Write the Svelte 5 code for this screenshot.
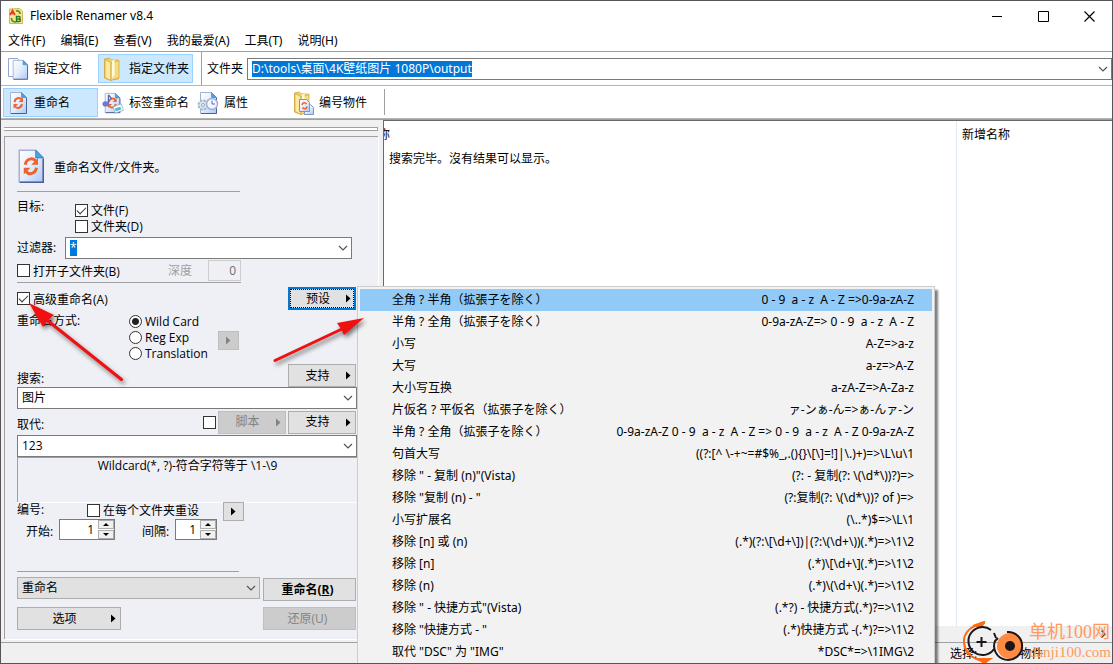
<script>
    const menus = ['文件(F)', '编辑(E)', '查看(V)', '我的最爱(A)', '工具(T)', '说明(H)'];

    const presets = [
        ['全角 ? 半角（拡張子を除く）', '0 - 9  a - z  A - Z =>0-9a-zA-Z'],
        ['半角 ? 全角（拡張子を除く）', '0-9a-zA-Z=> 0 - 9  a - z  A - Z'],
        ['小写', 'A-Z=>a-z'],
        ['大写', 'a-z=>A-Z'],
        ['大小写互换', 'a-zA-Z=>A-Za-z'],
        ['片仮名 ? 平仮名（拡張子を除く）', 'ァ-ンぁ-ん=>ぁ-んァ-ン'],
        ['半角 ? 全角（拡張子を除く）', '0-9a-zA-Z 0 - 9  a - z  A - Z => 0 - 9  a - z  A - Z 0-9a-zA-Z'],
        ['句首大写', '((?:[^ \\-+~=#$%_,.(){}\\[\\]=!]|\\.)+)=>\\L\\u\\1'],
        ['移除 " - 复制 (n)"(Vista)', '(?: - 复制(?: \\(\\d*\\))?)=>'],
        ['移除 "复制 (n) - "', '(?:复制(?: \\(\\d*\\))? of )=>'],
        ['小写扩展名', '(\\..*)$=>\\L\\1'],
        ['移除 [n] 或 (n)', '(.*)(?:\\[\\d+\\])|(?:\\(\\d+\\))(.*)=>\\1\\2'],
        ['移除 [n]', '(.*)\\[\\d+\\](.*)=>\\1\\2'],
        ['移除 (n)', '(.*)\\(\\d+\\)(.*)=>\\1\\2'],
        ['移除 " - 快捷方式"(Vista)', '(.*?) - 快捷方式(.*)?=>\\1\\2'],
        ['移除 "快捷方式 - "', '(.*)快捷方式 -(.*)?=>\\1\\2'],
        ['取代 "DSC" 为 "IMG"', '*DSC*=>\\1IMG\\2']
    ];

    let selected = $state(0);
    let path = $state('D:\\tools\\桌面\\4K壁纸图片 1080P\\output');
    let filter = $state('*');
    let search = $state('图片');
    let replace = $state('123');
    let mode = $state('wild');
</script>

{#snippet chevron()}
    <svg class="chevron" width="10" height="6" viewBox="0 0 10 6"><path d="M1 1l4 4 4-4" fill="none" stroke="#555" stroke-width="1.2" /></svg>
{/snippet}

{#snippet tri()}
    <svg class="tri" width="5" height="9" viewBox="0 0 5 9"><path d="M0 0.5v8l4.5-4z" fill="currentColor" /></svg>
{/snippet}

{#snippet page()}
    <path d="M3.5 1.5h11l5 5v16h-16z" fill="url(#paper)" stroke="#a3b1d6" />
    <path d="M19.500 7v15.500H4" fill="none" stroke="#4c5f96" />
    <path d="M14.500 1.500v5h5z" fill="#4aa3e8" stroke="#2f7fc9" stroke-width=".6" />
{/snippet}

{#snippet cycle()}
    <g fill="none" stroke="#f0622d" stroke-width="2">
        <path d="M7.500 11c.6-4 5-5 7-2.500" />
        <path d="M15 13c-.6 4-5 5-7 2.500" />
    </g>
    <path d="M16 6.500v4.500h-4.500zM6.500 17.500v-4.500h4.500z" fill="#f0622d" />
{/snippet}

{#snippet folder()}
    <path d="M2.500 2l5-1 2 2h7v19l-9 1-5-2z" fill="url(#folder)" stroke="#d2a93c" stroke-width=".8" />
    <path d="M3 2.500l6 3v18l-6-3z" fill="#fbe9a0" stroke="#cfa43a" stroke-width=".7" />
    <path d="M9 6l8-2.500v17l-8 3z" fill="#f6dc80" stroke="#cfa43a" stroke-width=".7" />
    <path d="M10 4l2.500-1.500v15l-2.500 4z" fill="#fffbe0" />
{/snippet}

<svg class="defs" width="0" height="0" aria-hidden="true">
    <defs>
        <linearGradient id="paper" x1="0" y1="0" x2="1" y2="1">
            <stop offset="0" stop-color="#fff" />
            <stop offset=".5" stop-color="#e4edfc" />
            <stop offset="1" stop-color="#a9c6f7" />
        </linearGradient>
        <linearGradient id="folder" x1="0" y1="0" x2="1" y2="0">
            <stop offset="0" stop-color="#e9c45c" />
            <stop offset="1" stop-color="#fbeaa2" />
        </linearGradient>
    </defs>
</svg>

<div class="window">
    <header class="titlebar">
        <svg width="16" height="16" viewBox="0 0 16 16">
            <path d="M1.500 1l10-.5 3 2.500v12.500h-13z" fill="#fbe38d" stroke="#d9b64c" />
            <path d="M2 7l2.500-4.500L7 7M3 5.500h3" fill="none" stroke="#e2411c" stroke-width="1.700" />
            <path d="M8 3c3-.5 4 1 4 3M8 14c-3 0-4.500-1-4.500-4" fill="none" stroke="#3f9c3b" stroke-width="1.700" />
            <path d="M8.500 8.500v5h2.500c2 0 2-2.500 0-2.500 1.500 0 1.500-2.500 0-2.500zM8.500 11H11" fill="none" stroke="#23792a" stroke-width="1.400" />
        </svg>
        <h1>Flexible Renamer v8.4</h1>
        <div class="winbtns">
            <button aria-label="最小化"><svg width="11" height="11"><path d="M0 5.500h10" stroke="#000" /></svg></button>
            <button aria-label="最大化"><svg width="11" height="11"><path d="M.5.500h10v10h-10z" fill="none" stroke="#000" /></svg></button>
            <button aria-label="关闭"><svg width="11" height="11"><path d="M.5.500l10 10M10.500.500l-10 10" stroke="#000" stroke-width="1.200" /></svg></button>
        </div>
    </header>

    <nav class="menubar">
        {#each menus as m}
            <button>{m}</button>
        {/each}
    </nav>

    <div class="toolbar">
        <button class="tool">
            <svg width="22" height="24" viewBox="0 0 22 24">
                <path d="M1.500 1.500h9l4 4v14h-13z" fill="#fff" stroke="#96a5d0" />
                <g transform="translate(3 2) scale(.9)">{@render page()}</g>
            </svg>
            指定文件
        </button>
        <button class="tool active">
            <svg width="22" height="24" viewBox="0 0 22 24">{@render folder()}</svg>
            指定文件夹
        </button>
        <span class="sep"></span>
        <label for="path">文件夹</label>
        <div class="combo grow">
            <input id="path" class="marked" bind:value={path} />
            {@render chevron()}
        </div>
    </div>

    <div class="toolbar second">
        <button class="tool active">
            <svg width="22" height="24" viewBox="0 0 22 24">{@render page()}{@render cycle()}</svg>
            重命名
        </button>
        <button class="tool">
            <svg width="22" height="24" viewBox="0 0 24 24">
                {@render page()}{@render cycle()}
                <path d="M7 3v10M7 3c1 2 3 2 3 5" fill="none" stroke="#5967b5" stroke-width="1.500" />
                <ellipse cx="4" cy="13" rx="3.500" ry="2.800" fill="#6c7bc9" />
                <path d="M12 16l9-3 2.500 7-9 3z" fill="#f4fbff" stroke="#7fa9c4" stroke-width=".8" />
                <path d="M14 18l6-2 1 3-6 2z" fill="#5bb8c9" />
            </svg>
            标签重命名
        </button>
        <button class="tool">
            <svg width="22" height="24" viewBox="0 0 22 24">
                {@render page()}
                <circle cx="6" cy="14" r="4.500" fill="#dbe5ee" stroke="#a5b8cb" stroke-width="2" stroke-dasharray="2.500 1" />
                <circle cx="6" cy="14" r="1.500" fill="#fff" stroke="#93a8bd" />
                <circle cx="15" cy="13" r="5.500" fill="#f2f7ff" stroke="#a3aedb" stroke-width="1.500" />
                <path d="M15 9.500V13h3" fill="none" stroke="#5b6bb0" />
            </svg>
            属性
        </button>
        <button class="tool">
            <svg width="22" height="24" viewBox="0 0 22 24">
                {@render folder()}
                <path d="M12.500 13.500h6l3 3v7h-9z" fill="url(#paper)" stroke="#7f93c8" />
                <path d="M7.500 8.500h7l3 3v9h-10z" fill="url(#paper)" stroke="#7f93c8" />
                <path d="M10 14c.5-2.500 3-3 4.500-1M15 15.500c-.5 2.500-3 3-4.500 1" fill="none" stroke="#f0622d" stroke-width="1.600" />
            </svg>
            编号物件
        </button>
        <span class="sep"></span>
    </div>

    <main>
        <section class="side">
            <div class="grip"></div>
            <form class="panel" onsubmit={(e) => e.preventDefault()}>
                <div class="row head">
                    <svg width="30" height="38" viewBox="2 0 20 25" preserveAspectRatio="none">{@render page()}{@render cycle()}</svg>
                    <span>重命名文件/文件夹。</span>
                </div>

                <div class="row target">
                    <span class="caption">目标:</span>
                    <div class="stack">
                        <label><input type="checkbox" checked /><span>文件(F)</span></label>
                        <label><input type="checkbox" /><span>文件夹(D)</span></label>
                    </div>
                </div>

                <div class="row filter">
                    <label for="filter">过滤器:</label>
                    <div class="combo">
                        <input id="filter" class="marked" bind:value={filter} />
                        {@render chevron()}
                    </div>
                </div>

                <div class="row sub">
                    <label><input type="checkbox" /><span>打开子文件夹(B)</span></label>
                    <label class="depth">深度 <input type="text" value="0" disabled /></label>
                </div>

                <div class="row adv">
                    <label><input type="checkbox" checked /><span>高级重命名(A)</span></label>
                    <div class="preset">
                        <button type="button" class="btn focus"><span>预设</span>{@render tri()}</button>
                        <div class="popup" role="menu">
                            {#each presets as [name, rule], i}
                                <button
                                    type="button"
                                    role="menuitem"
                                    class:hot={i === selected}
                                    onmouseenter={() => (selected = i)}
                                >
                                    <span>{name}</span>
                                    <span>{rule}</span>
                                </button>
                            {/each}
                        </div>
                    </div>
                </div>

                <div class="row mode">
                    <span class="caption">重命名方式:</span>
                    <div class="stack">
                        <label><input type="radio" value="wild" bind:group={mode} /><span>Wild Card</span></label>
                        <label><input type="radio" value="reg" bind:group={mode} /><span>Reg Exp</span></label>
                        <label><input type="radio" value="trans" bind:group={mode} /><span>Translation</span></label>
                    </div>
                    <button type="button" class="mini" disabled aria-label="选项">{@render tri()}</button>
                </div>

                <div class="row split">
                    <label for="search">搜索:</label>
                    <button type="button" class="btn"><span>支持</span>{@render tri()}</button>
                </div>
                <div class="combo">
                    <input id="search" bind:value={search} />
                    {@render chevron()}
                </div>

                <div class="row split lower">
                    <label for="replace">取代:</label>
                    <input type="checkbox" aria-label="脚本" />
                    <button type="button" class="btn" disabled><span>脚本</span>{@render tri()}</button>
                    <button type="button" class="btn"><span>支持</span>{@render tri()}</button>
                </div>
                <div class="combo">
                    <input id="replace" bind:value={replace} />
                    {@render chevron()}
                </div>

                <p class="hint">Wildcard(*, ?)-符合字符等于 \1-\9</p>

                <div class="row number">
                    <span class="caption">编号:</span>
                    <label><input type="checkbox" /><span>在每个文件夹重设</span></label>
                    <button type="button" class="mini" aria-label="编号选项">{@render tri()}</button>
                </div>
                <div class="row spins">
                    <label for="start">开始:</label>
                    <div class="spin wide">
                        <input id="start" value="1" />
                        <div><button type="button" aria-label="增加"></button><button type="button" class="down" aria-label="减少"></button></div>
                    </div>
                    <label for="step">间隔:</label>
                    <div class="spin">
                        <input id="step" value="1" />
                        <div><button type="button" aria-label="增加"></button><button type="button" class="down" aria-label="减少"></button></div>
                    </div>
                </div>

                <div class="line"></div>

                <div class="row actions">
                    <div class="combo gray">
                        <select aria-label="动作"><option>重命名</option></select>
                        {@render chevron()}
                    </div>
                    <button type="button" class="btn big strong">重命名(<u>R</u>)</button>
                </div>
                <div class="row actions">
                    <button type="button" class="btn options"><span>选项</span>{@render tri()}</button>
                    <button type="button" class="btn big" disabled>还原(U)</button>
                </div>
            </form>
        </section>

        <section class="list">
            <div class="columns">
                <div class="col"><span class="cut">名称</span><p>搜索完毕。沒有结果可以显示。</p></div>
                <div class="col last">新增名称</div>
            </div>
            <div class="scroll"><svg width="5" height="8"><path d="M.5.500l3.500 3.500-3.500 3.500" fill="none" stroke="#444" stroke-width="1.500" /></svg></div>
        </section>
    </main>

    <footer>
        <span class="state">选择:</span>
        <span>物件</span>
    </footer>

    <svg class="arrows" width="400" height="400" aria-hidden="true">
        <g class="arrow">
            <path d="M121.500 379.500l-74-59" />
            <path class="tip" d="M29 303l25 12-6 5-5 7z" />
            <path d="M275 360.500l68-32" />
            <path class="tip" d="M364 318l-27 5 4 6 3 6z" />
        </g>
    </svg>

    <div class="brand">
        <svg width="66" height="42" viewBox="0 0 66 42">
            <path d="M22 2C7 4 0 13 1 22c1 9 6 14 15 17l8 2" fill="none" stroke="#ff6a10" stroke-width="2" />
            <path d="M10 5l11-4-2 4zM16 38l11 0-6 4z" fill="#ff6a10" stroke="#ff6a10" stroke-width="2" />
            <path d="M28 9a14 14 0 1 0 3 19" fill="none" stroke="#1d1517" stroke-width="2" />
            <path d="M18.500 16v10M13.500 21h10" stroke="#1d1517" stroke-width="2" />
            <circle cx="47" cy="25" r="13" fill="#ff8b43" />
            <path d="M31 12l2 5M44 11a14 14 0 1 1-12 9l3-3" fill="none" stroke="#1d1517" stroke-width="2" />
            <circle cx="47" cy="25" r="5" fill="#1d1517" />
        </svg>
        <div>
            <span class="zh">单机100网</span>
            <span class="url">danji100.com</span>
        </div>
    </div>
</div>

<style>
    :global(body) {
        margin: 0;
        background: #fff;
    }

    .defs {
        position: absolute;
    }

    .window {
        position: relative;
        display: flex;
        flex-direction: column;
        height: 100vh;
        box-sizing: border-box;
        border: 1px solid #56535a;
        overflow: hidden;
        background: #fff;
        color: #000;
        font: 12px/16px "Open Sans", "Noto Sans CJK SC", sans-serif;
    }

    .window :global(svg) {
        flex: none;
    }

    button, input, select {
        font: inherit;
        color: inherit;
        margin: 0;
        padding: 0;
        border: 0;
        background: none;
        box-sizing: border-box;
        outline: none;
    }

    label {
        display: flex;
        align-items: center;
        white-space: nowrap;
    }

    .titlebar, .menubar, .popup {
        font-family: "Noto Sans", "Noto Sans CJK SC", sans-serif;
    }

    .titlebar {
        display: flex;
        align-items: center;
        gap: 6px;
        height: 30px;
        padding-left: 7px;
    }

    h1 {
        margin: 0;
        font-size: 12px;
        font-weight: 400;
    }

    .winbtns {
        display: flex;
        margin-left: auto;
    }

    .winbtns button {
        display: flex;
        align-items: center;
        justify-content: center;
        width: 46px;
        height: 30px;
    }

    .menubar {
        display: flex;
        gap: 15px;
        height: 20px;
        padding-left: 7px;
        border-bottom: 1px solid #a0a0a0;
    }

    .toolbar {
        display: flex;
        align-items: center;
        height: 33px;
        padding-left: 2px;
        border-bottom: 1px solid #b4b4b4;
    }

    .second {
        height: 32px;
    }

    .tool {
        display: flex;
        align-items: center;
        gap: 5px;
        width: 95px;
        height: 29px;
        padding-left: 3px;
        border: 1px solid transparent;
        white-space: nowrap;
    }

    .second .tool {
        padding-top: 2px;
    }

    .active {
        background: #cce8ff;
        border-color: #99d1ff;
    }

    .sep {
        width: 1px;
        align-self: stretch;
        background: #a0a0a0;
        margin: 0 5px 0 8px;
    }

    .second .sep {
        margin: 3px 0 3px 1px;
    }

    .toolbar label {
        margin-right: 4px;
    }

    .combo {
        display: flex;
        align-items: center;
        justify-content: space-between;
        height: 22px;
        box-sizing: border-box;
        padding: 0 3px 0 4px;
        border: 1px solid #7a7a7a;
        background: #fff;
    }

    .combo input {
        min-width: 0;
        height: 16px;
    }

    .combo .marked {
        field-sizing: content;
        background: #0078d7;
        color: #fff;
    }

    .grow {
        flex: 1;
    }

    .grow input {
        font-family: "Noto Sans", "Noto Sans CJK SC", sans-serif;
    }

    main {
        display: flex;
        flex: 1;
        min-height: 0;
        border-top: 1px solid #a0a0a0;
    }

    .side {
        width: 382px;
        box-sizing: border-box;
        padding: 7px 5px 0 3px;
        background: #f0f0f0;
        flex: none;
    }

    .grip {
        height: 2px;
        margin-bottom: 5px;
        border: solid #a0a0a0;
        border-width: 1px 1px 1px 0;
        background: #fff;
    }

    .panel {
        padding: 0 21px 9px 12px;
        border: solid #a0a0a0;
        border-width: 1px 0 0 1px;
        box-shadow: 1px 1px #fff;
        background: #eff0f5;
    }

    .row {
        display: flex;
        box-sizing: border-box;
    }

    .head {
        width: 223px;
        height: 55px;
        align-items: center;
        gap: 7px;
        padding-top: 6px;
        border-bottom: 1px solid #a0a0a0;
    }

    .head span, label span {
        padding-top: 2px;
        line-height: 14px;
    }

    .caption {
        white-space: nowrap;
    }

    .target {
        height: 45px;
        padding-top: 7px;
    }

    .target .caption {
        width: 58px;
    }

    .target .stack {
        padding-top: 3px;
    }

    input[type='checkbox'], input[type='radio'] {
        appearance: none;
        width: 13px;
        height: 13px;
        margin-right: 3px;
        border: 1px solid #333;
        background: #fff;
        flex: none;
    }

    input[type='checkbox']:checked::after {
        content: '';
        display: block;
        width: 9px;
        height: 5px;
        margin: 2px 0 0 1px;
        border: solid #333;
        border-width: 0 0 1px 1px;
        box-sizing: border-box;
        transform: rotate(-45deg);
    }

    input[type='radio'] {
        border-radius: 50%;
    }

    input[type='radio']:checked {
        background: radial-gradient(circle, #222 3px, #fff 4px);
    }

    .filter .combo {
        width: 287px;
        flex: none;
    }

    .filter label {
        width: 48px;
    }

    .sub {
        width: 224px;
        height: 24px;
        justify-content: space-between;
        border-bottom: 1px solid #a0a0a0;
    }

    .depth {
        gap: 16px;
        color: #a0a0a0;
    }

    .depth input {
        width: 33px;
        height: 21px;
        padding-right: 4px;
        border: 1px solid #ccc;
        text-align: right;
        color: #6d6d6d;
    }

    .adv {
        height: 27px;
        padding-top: 4px;
        justify-content: space-between;
    }

    .preset {
        position: relative;
        z-index: 2;
        margin-right: 1px;
    }

    .btn {
        display: flex;
        align-items: center;
        justify-content: center;
        width: 68px;
        height: 23px;
        padding-right: 4px;
        border: 1px solid #adadad;
        background: #e1e1e1;
    }

    .btn span {
        flex: 1;
    }

    .btn:disabled, .mini:disabled {
        background: #ccc;
        border-color: #bfbfbf;
        color: #838383;
    }

    .btn.focus {
        border: 2px solid #0078d7;
        padding-right: 3px;
        outline: 1px dotted #000;
        outline-offset: -3px;
    }

    .popup {
        position: absolute;
        top: -1px;
        left: 69px;
        width: 572px;
        padding: 2px;
        border: 1px solid #ccc;
        background: #f2f2f2;
        box-shadow: 3px 4px 2px rgba(0, 0, 0, 0.5);
    }

    .popup button {
        display: flex;
        align-items: center;
        justify-content: space-between;
        width: 100%;
        height: 22px;
        padding: 0 18px 0 32px;
        white-space: pre;
    }

    .popup .hot {
        background: #91c9f7;
    }

    .mode {
        height: 54px;
        padding-top: 3px;
    }

    .mode .caption {
        width: 112px;
    }

    .mode .stack {
        width: 89px;
    }

    .mini {
        display: flex;
        align-items: center;
        justify-content: center;
        width: 21px;
        height: 19px;
        border: 1px solid #adadad;
        background: #e1e1e1;
    }

    .mode .mini {
        margin-top: 18px;
    }

    .split {
        height: 23px;
        align-items: center;
        gap: 2px;
        padding-right: 1px;
    }

    .split label {
        margin-right: auto;
        padding-top: 6px;
    }

    .split input {
        margin-right: 0;
    }

    .lower {
        height: 26px;
    }

    .hint {
        height: 45px;
        margin: 0;
        box-sizing: border-box;
        border: solid #a0a0a0;
        border-width: 1px 0 0 1px;
        box-shadow: 0 1px #fff;
        text-align: center;
    }

    .number {
        height: 17px;
        align-items: flex-start;
    }

    .number .caption {
        width: 70px;
    }

    .number label {
        width: 136px;
    }

    .spins {
        height: 21px;
        padding-left: 9px;
    }

    .spins label {
        width: 33px;
        padding-top: 4px;
    }

    .spin {
        display: flex;
        width: 42px;
        box-sizing: border-box;
        border: 1px solid #7a7a7a;
        background: #fff;
    }

    .spin.wide {
        width: 56px;
        margin-right: 27px;
    }

    .spin input {
        flex: 1;
        min-width: 0;
        padding-right: 4px;
        text-align: right;
    }

    .spin div {
        display: flex;
        flex-direction: column;
        gap: 1px;
        width: 16px;
    }

    .spin button {
        display: flex;
        align-items: center;
        justify-content: center;
        flex: 1;
        border: 1px solid #adadad;
        background: #f0f0f0;
    }

    .spin button::after {
        content: '';
        border: 3px solid transparent;
        border-top: 0;
        border-bottom-color: #000;
    }

    .spin .down::after {
        border-top: 3px solid #000;
        border-bottom: 0;
    }

    .line {
        width: 222px;
        height: 31px;
        border-bottom: 1px solid #a0a0a0;
    }

    .actions {
        justify-content: space-between;
        margin-top: 5px;
        padding-right: 1px;
    }

    .actions .btn {
        margin-top: 1px;
    }

    .gray {
        width: 243px;
        background: #e1e1e1;
        border-color: #adadad;
    }

    select {
        appearance: none;
        flex: 1;
    }

    .big {
        width: 93px;
    }

    .strong {
        font-weight: 700;
    }

    .options {
        width: 104px;
    }

    .list {
        display: flex;
        flex-direction: column;
        flex: 1;
        min-width: 0;
        border: solid #696969;
        border-width: 1px 0 0 1px;
    }

    .columns {
        display: flex;
        flex: 1;
    }

    .col {
        flex: 1;
        padding-top: 6px;
        overflow: hidden;
    }

    .cut {
        display: block;
        width: 6px;
        overflow: hidden;
        white-space: nowrap;
        direction: rtl;
    }

    .col p {
        margin: 8px 0 0 5px;
    }

    .last {
        flex: none;
        width: 150px;
        padding-left: 5px;
        border-left: 1px solid #e2e8f0;
    }

    .scroll {
        display: flex;
        align-items: center;
        justify-content: flex-end;
        height: 16px;
        padding-right: 6px;
        background: #f0f0f0;
    }

    footer {
        display: flex;
        align-items: center;
        gap: 42px;
        height: 18px;
        padding: 2px 0 0 949px;
        border-top: 1px solid #a0a0a0;
        background: #f0f0f0;
        white-space: nowrap;
    }

    .arrows {
        position: absolute;
        top: -1px;
        left: -1px;
        z-index: 3;
        pointer-events: none;
    }

    .arrow {
        fill: none;
        stroke: #f01010;
        stroke-width: 3;
        stroke-linecap: round;
        filter: drop-shadow(2px 3px 2px rgba(0, 0, 0, 0.5));
    }

    .tip {
        fill: #f01010;
        stroke: none;
    }

    .brand {
        position: absolute;
        right: 1px;
        bottom: 0;
        z-index: 3;
        display: flex;
        color: #ff9a5c;
        font-family: "Liberation Serif", "Noto Sans CJK SC", serif;
        pointer-events: none;
    }

    .brand span {
        display: block;
        white-space: nowrap;
    }

    .zh {
        font-size: 18px;
        line-height: 22px;
    }

    .url {
        font-size: 15px;
        line-height: 18px;
    }
</style>
